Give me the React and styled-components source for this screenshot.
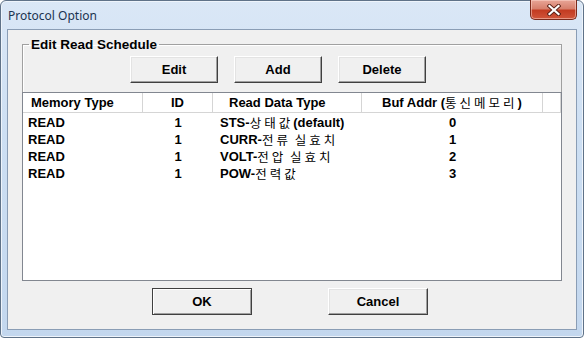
import React from "react";
import styled, { createGlobalStyle } from "styled-components";

const GlobalStyle = createGlobalStyle`
  body {
    margin: 0;
    background: #ffffff;
  }
`;

// 창 전체
const Window = styled.div`
  position: relative;
  box-sizing: border-box;
  width: 584px;
  height: 338px;
  display: flex;
  flex-direction: column;
  border: 1px solid #5f7288;
  border-radius: 6px 6px 4px 4px;
  background: linear-gradient(#dae7f6 0%, #cddff3 40%, #c3d7ee 100%);
  box-shadow: inset 0 0 0 1px #eef4fb;
`;

// 타이틀 바
const TitleBar = styled.div`
  height: 28px;
  display: flex;
  align-items: center;
  padding-left: 7px;
  font-family: "Noto Sans", "Open Sans", sans-serif;
  font-size: 12px;
  color: #1b3350;
`;

// 닫기 버튼 (타이틀 바 위에 겹침)
const CloseButton = styled.div`
  position: absolute;
  top: -1px;
  right: 6px;
  width: 47px;
  height: 20px;
  box-sizing: border-box;
  border: 1px solid #7a2a1c;
  border-top: none;
  border-radius: 0 0 5px 5px;
  background: linear-gradient(#e8a597 0%, #d7806d 45%, #c33c22 55%, #d0553a 100%);
  box-shadow: inset 0 0 0 1px rgba(255, 220, 210, 0.5);
  display: flex;
  align-items: center;
  justify-content: center;
`;

// 본문 영역
const Client = styled.div`
  flex: 1;
  margin: 0 6px 7px;
  border: 1px solid #8a9db5;
  background: #f0f0f0;
  padding: 0 14px;
  display: flex;
  flex-direction: column;
`;

// 그룹 박스
const Group = styled.fieldset`
  margin: 7px 0 0;
  padding: 0;
  border: 1px solid #a0a0a0;
  box-shadow: inset 1px 1px 0 #ffffff;
  min-width: 0;
`;

const GroupTitle = styled.legend`
  margin-left: 6px;
  padding: 0 2px;
  font-family: "Liberation Sans", Arial, sans-serif;
  font-weight: bold;
  font-size: 13.5px;
  line-height: 15px;
  color: #000;
`;

// 버튼 줄
const ButtonRow = styled.div`
  display: flex;
  gap: ${(p) => p.$gap}px;
  padding-left: ${(p) => p.$left}px;
  margin-top: ${(p) => p.$top}px;
`;

// 클래식 버튼
const Button = styled.button`
  box-sizing: border-box;
  width: ${(p) => p.$w}px;
  height: 27px;
  padding: 0;
  background: #f0f0f0;
  border: 1px solid;
  border-color: ${(p) => (p.$default ? "#404040" : "#ffffff #404040 #404040 #ffffff")};
  box-shadow: ${(p) =>
    p.$default
      ? "inset 1px 1px 0 #ffffff, inset -1px -1px 0 #a0a0a0"
      : "inset -1px -1px 0 #a0a0a0, inset 1px 1px 0 #e3e3e3"};
  font-family: "Liberation Sans", Arial, sans-serif;
  font-weight: bold;
  font-size: 13px;
  color: #000;
`;

// 리스트 뷰
const List = styled.div`
  margin: 9px -1px -1px;
  height: 189px;
  box-sizing: border-box;
  border: 1px solid #828790;
  background: #ffffff;
  font-family: "Liberation Sans", Arial, "Noto Sans CJK KR", sans-serif;
  font-weight: bold;
  font-size: 13px;
  line-height: 15px;
  color: #000;
`;

const Row = styled.div`
  display: grid;
  grid-template-columns: 120px 70px 149px 181px 1fr;
  height: ${(p) => (p.$head ? 20 : 17)}px;
  margin-bottom: ${(p) => (p.$head ? 1 : 0)}px;
  align-items: center;
`;

const HeadCell = styled.div`
  height: 100%;
  display: flex;
  align-items: center;
  justify-content: ${(p) => (p.$center ? "center" : "flex-start")};
  padding-left: ${(p) => p.$pad || 0}px;
  border-right: 1px solid #d5d5d5;
  border-bottom: 1px solid #d5d5d5;
  box-sizing: border-box;
  white-space: nowrap;
`;

const Cell = styled.div`
  height: 17px;
  display: flex;
  align-items: center;
  justify-content: ${(p) => (p.$center ? "center" : "flex-start")};
  padding-left: ${(p) => p.$pad || 0}px;
  white-space: nowrap;
`;

// 한글 부분 (굵지 않고 넓은 자간)
const Ko = styled.span`
  font-family: "Noto Sans CJK KR", sans-serif;
  font-weight: 400;
  font-size: 12.5px;
  line-height: 15px;
  letter-spacing: 3px;
  word-spacing: -2px;
`;

const rows = [
  { mem: "READ", id: 1, pre: "STS-", ko: "상태값", post: "(default)", addr: 0 },
  { mem: "READ", id: 1, pre: "CURR-", ko: "전류 실효치", post: "", addr: 1 },
  { mem: "READ", id: 1, pre: "VOLT-", ko: "전압 실효치", post: "", addr: 2 },
  { mem: "READ", id: 1, pre: "POW-", ko: "전력값", post: "", addr: 3 },
];

const CloseIcon = () => (
  <svg width="14" height="12" viewBox="0 0 14 12">
    <path d="M2.5 2 L11.5 10 M11.5 2 L2.5 10" stroke="#5a2016" strokeWidth="4" strokeLinecap="square" />
    <path d="M2.5 2 L11.5 10 M11.5 2 L2.5 10" stroke="#ffffff" strokeWidth="2.2" strokeLinecap="square" />
  </svg>
);

const App = () => {
  return (
    <>
      <GlobalStyle />
      <Window>
        <TitleBar>Protocol Option</TitleBar>
        <CloseButton>
          <CloseIcon />
        </CloseButton>
        <Client>
          <Group>
            <GroupTitle>Edit Read Schedule</GroupTitle>
            <ButtonRow $gap={16} $left={107} $top={4}>
              <Button $w={88}>Edit</Button>
              <Button $w={88}>Add</Button>
              <Button $w={88}>Delete</Button>
            </ButtonRow>
            <List>
              <Row $head>
                <HeadCell $pad={8}>Memory Type</HeadCell>
                <HeadCell $center>ID</HeadCell>
                <HeadCell $pad={16}>Read Data Type</HeadCell>
                <HeadCell $center>
                  Buf Addr (<Ko>통신메모리</Ko>)
                </HeadCell>
                <HeadCell />
              </Row>
              {rows.map((r, i) => (
                <Row key={i}>
                  <Cell $pad={5}>{r.mem}</Cell>
                  <Cell $center>{r.id}</Cell>
                  <Cell $pad={7}>
                    {r.pre}
                    <Ko>{r.ko}</Ko>
                    {r.post}
                  </Cell>
                  <Cell $center>{r.addr}</Cell>
                  <Cell />
                </Row>
              ))}
            </List>
          </Group>
          <ButtonRow $gap={76} $left={130} $top={7}>
            <Button $w={100} $default>
              OK
            </Button>
            <Button $w={100}>Cancel</Button>
          </ButtonRow>
        </Client>
      </Window>
    </>
  );
};

export default App;
